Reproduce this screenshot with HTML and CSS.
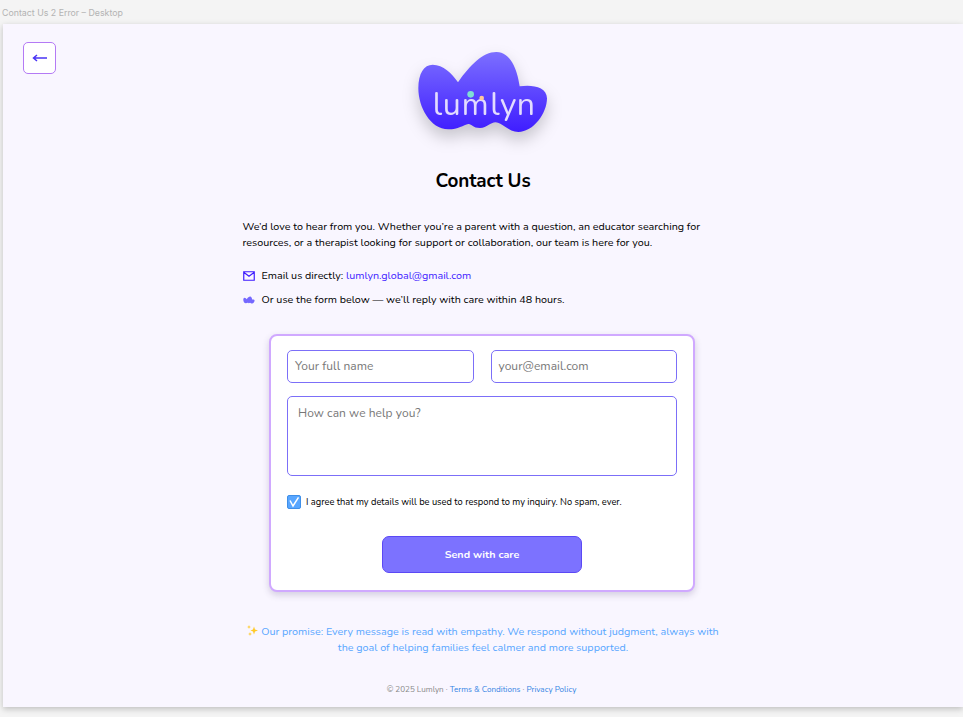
FILE: index.html
```html
<!DOCTYPE html>
<html lang="en">
<head>
<meta charset="utf-8">
<title>Contact Us</title>
<link rel="stylesheet" href="styles.css">
</head>
<body>
<div class="frame-label">Contact Us 2 Error – Desktop</div>
<div class="frame">
  <button class="back" aria-label="Back">
    <svg width="16" height="10" viewBox="0 0 16 10"><path d="M1.5 5H15M5 2L1.5 5L5 8" fill="none" stroke="#4a35f5" stroke-width="1.5"/></svg>
  </button>
  <header class="header">
    <svg class="logo" width="170" height="120" viewBox="0 0 510 360">
      <defs><linearGradient id="g" x1="0" y1="0" x2="0" y2="1"><stop offset="0" stop-color="#7c6fff"/><stop offset="1" stop-color="#3f1dff"/></linearGradient></defs>
      <path fill="url(#g)" d="M174 142C210 90 250 50 290 51C330 52 352 100 359 154C395 148 441 155 441 190C441 235 400 291 355 291C325 291 305 262 287 262C270 262 262 279 240 279C218 279 215 266 205 267C190 270 175 283 145 283C90 283 55 215 55 160C55 115 72 89 98 89C130 89 155 115 174 142Z"/>
      <text class="wordmark" y="241" x="98 128 185 271 300 350">lu<tspan class="small-m">m</tspan>lyn</text>
      <circle cx="212" cy="178" r="10" fill="#7fe0d4"/><circle cx="245" cy="189" r="7" fill="#ffc79b"/>
    </svg>
    <h1>Contact Us</h1>
  </header>
  <main class="content">
    <p class="intro">We’d love to hear from you. Whether you’re a parent with a question, an educator searching for<br>resources, or a therapist looking for support or collaboration, our team is here for you.</p>
    <div class="row">
      <svg width="12" height="10" viewBox="0 0 12 10"><path d="M.75.75H11.25V9.25H.75ZM1 1.5L6 5.2L11 1.5" fill="none" stroke="#3f1dff" stroke-width="1.2"/></svg>
      <span>Email us directly: <a href="#">lumlyn.global@gmail.com</a></span>
    </div>
    <div class="row">
      <svg width="12" height="10" viewBox="45 40 410 260"><path fill="#7568ff" d="M174 142C210 90 250 50 290 51C330 52 352 100 359 154C395 148 441 155 441 190C441 235 400 291 355 291C325 291 305 262 287 262C270 262 262 279 240 279C218 279 215 266 205 267C190 270 175 283 145 283C90 283 55 215 55 160C55 115 72 89 98 89C130 89 155 115 174 142Z"/></svg>
      <span>Or use the form below — we’ll reply with care within 48 hours.</span>
    </div>
  </main>
  <form class="card">
    <div class="fields">
      <div class="field">Your full name</div>
      <div class="field">your@email.com</div>
    </div>
    <div class="field area">How can we help you?</div>
    <div class="agree">
      <svg width="14" height="14" viewBox="0 0 14 14"><rect x=".5" y=".5" width="13" height="13" rx="1.5" fill="#58a6ff" stroke="#3f8fe8"/><path d="M3 5.5L6 11L11.5 2.3" fill="none" stroke="#fff" stroke-width="1.5"/></svg>
      <span>I agree that my details will be used to respond to my inquiry. No spam, ever.</span>
    </div>
    <button type="button" class="send">Send with care</button>
  </form>
  <p class="promise">
    <svg width="11" height="11" viewBox="0 0 11 11"><path fill="#ffc928" d="M7 1.5L8 4.6L11 5.5L8 6.4L7 9.5L6 6.4L3.5 5.5L6 4.6ZM2 0L2.5 1.5L4 2L2.5 2.5L2 4L1.5 2.5L0 2L1.5 1.5ZM3 7L3.5 8.5L5 9L3.5 9.5L3 11L2.5 9.5L1 9L2.5 8.5Z"/></svg>
    Our promise: Every message is read with empathy. We respond without judgment, always with<br>the goal of helping families feel calmer and more supported.
  </p>
  <footer class="footer">© 2025 Lumlyn · <a href="#">Terms &amp; Conditions</a> · <a href="#">Privacy Policy</a></footer>
</div>
</body>
</html>
```
FILE: styles.css
```css
* { box-sizing: border-box; }
body { margin: 0; height: 717px; overflow: hidden; background: #f4f4f4; font-family: Nunito, Lato, sans-serif; color: #000; }
a { color: inherit; text-decoration: none; }
p, h1 { margin: 0; }
button { font-family: inherit; padding: 0; }
.frame-label { height: 24px; padding: 6px 0 0 2px; font: 8.8px/13px Inter, sans-serif; color: #b3b3b3; }
.frame { position: relative; height: 683px; margin-left: 3px; background: #f9f6ff; box-shadow: 0 2px 6px rgba(0,0,0,.22); display: flex; flex-direction: column; align-items: center; }
.back { position: absolute; left: 20px; top: 18px; width: 33px; height: 32px; display: flex; align-items: center; justify-content: center; background: #fff; border: 1px solid #b47af5; border-radius: 5px; }
.header { display: flex; flex-direction: column; align-items: center; padding-top: 11px; }
.logo { display: block; margin-left: 4px; filter: drop-shadow(0 8px 8px rgba(0,0,0,.2)); }
.wordmark { font-family: Nunito, Lato, sans-serif; font-size: 96px; font-weight: 400; fill: #e3dcff; }
.small-m { font-size: 94px; }
h1 { font-size: 18.9px; line-height: 26px; margin-top: 13px; letter-spacing: -.1px; }
.content { width: 481px; margin-top: 25px; font-size: 10.75px; line-height: 16px; white-space: nowrap; }
.row { display: flex; align-items: center; gap: 7px; height: 24px; }
.intro { margin-bottom: 12px; height: 33px; line-height: 16.3px; }
.row a { color: #3f1dff; }
.card { width: 426px; height: 258px; margin: 22px 2px 0 0; padding: 14px 16px; background: #fff; border: 2px solid #d0a9ff; border-radius: 8px; box-shadow: 0 3px 7px rgba(60,40,100,.2); display: flex; flex-direction: column; }
.fields { display: grid; grid-template-columns: 1fr 1fr; gap: 17px; }
.field { height: 33px; padding: 7px; border: 1px solid #7c6ff8; border-radius: 5px; color: #777; font-size: 12px; letter-spacing: .05px; line-height: 16px; }
.area { height: 80px; margin-top: 13px; padding: 8px 10px; }
.agree { display: flex; align-items: center; gap: 5px; height: 14px; margin-top: 19px; font-size: 9.3px; white-space: nowrap; }
.send { align-self: center; width: 200px; height: 37px; margin-top: 27px; background: #7c72ff; border: 1px solid #5b48f5; border-radius: 7px; color: #fff; font-size: 10.75px; font-weight: 700; }
.promise { margin-top: 32px; text-align: center; color: #58a6ff; font-size: 10.75px; line-height: 16px; white-space: nowrap; }
.promise svg { vertical-align: -1px; }
.footer { margin: 28px 3px 0 0; font-size: 8.1px; line-height: 12px; color: #888; }
.footer a { color: #3484e4; }
```
